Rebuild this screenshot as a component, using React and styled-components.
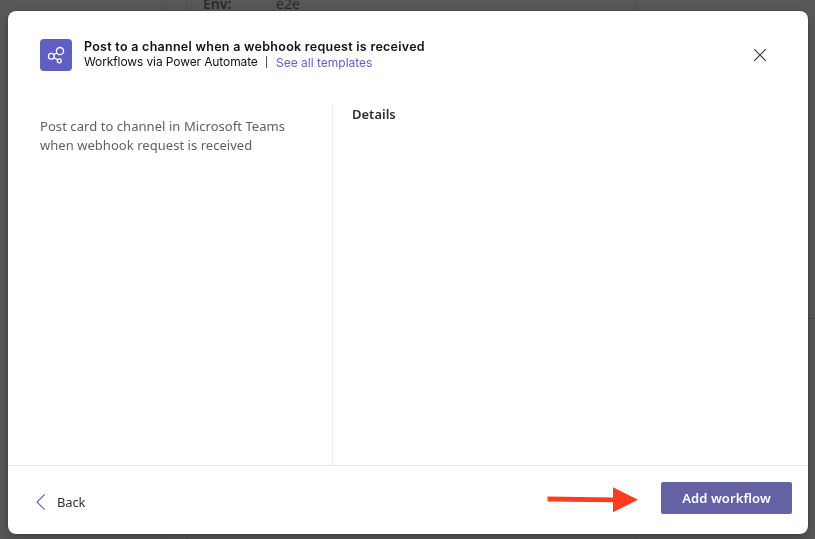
import React from "react";
import styled, { createGlobalStyle } from "styled-components";

const GlobalStyle = createGlobalStyle`
  * { box-sizing: border-box; }
  html, body { margin: 0; padding: 0; }
  body { overflow: hidden; background: #595959; }
`;

const system = `Inter, "Liberation Sans", sans-serif`;
const segoe = `"Noto Sans", "Open Sans", sans-serif`;

const Page = styled.div`
  position: relative;
  width: 815px;
  height: 539px;
  overflow: hidden;
  background: #595959;
`;

const Backdrop = styled.div`
  display: grid;
  grid-template-columns: 167px 20px 449px 1fr;
  height: 100%;
`;

const BackdropPane = styled.div`
  border-right: ${(p) => (p.$last ? "0" : "1px solid #535353")};
  padding-left: ${(p) => (p.$inset ? "16px" : "0")};
`;

const BackdropSection = styled.div`
  height: 319px;
  border-bottom: 1px solid #4c4c4c;
`;

const EnvRow = styled.div`
  display: grid;
  grid-template-columns: 73px 1fr;
  margin-top: -6px;
  font: 400 14px/20px ${segoe};
  color: #292929;
`;

const EnvLabel = styled.span`
  font-weight: 600;
`;

const Dialog = styled.section`
  position: absolute;
  top: 11px;
  left: 8px;
  display: flex;
  flex-direction: column;
  width: 800px;
  height: 523px;
  border-radius: 8px;
  background: #fff;
  box-shadow: 0 4px 14px rgba(0, 0, 0, 0.28), 0 0 2px rgba(0, 0, 0, 0.3);
  will-change: transform;
`;

const Header = styled.header`
  display: flex;
  align-items: flex-start;
  height: 93px;
  padding: 28px 32px 0;
`;

const AppIcon = styled.div`
  display: flex;
  flex: none;
  width: 32px;
  height: 32px;
  margin-right: 12px;
  border-radius: 4px;
  background: #605ec2;
`;

const Titles = styled.div`
  flex: 1;
  font-family: ${system};
  color: #111;
`;

const Title = styled.h1`
  margin: 0 0 -1px;
  font-size: 12.5px;
  font-weight: 600;
  line-height: 16px;
  letter-spacing: 0.27px;
  white-space: nowrap;
`;

const Subtitle = styled.div`
  display: flex;
  font-size: 12px;
  line-height: 15px;
  white-space: nowrap;
`;

const Provider = styled.span`
  width: 181px;
  letter-spacing: -0.11px;
`;

const Separator = styled.span`
  width: 11px;
  padding-top: 1px;
  font-size: 10px;
`;

const TemplateLink = styled.a`
  padding-top: 1px;
  letter-spacing: 0;
  color: #6360c9;
`;

const CloseButton = styled.button`
  display: flex;
  margin: 9px 9px 0 0;
  padding: 0;
  border: 0;
  background: none;
`;

const Body = styled.main`
  display: grid;
  grid-template-columns: 325px 1fr;
  height: 361px;
`;

const Description = styled.p`
  margin: 0;
  padding: 13px 32px 0;
  border-right: 1px solid #ebebeb;
  font: 400 13px/19px ${segoe};
  color: #616161;
  white-space: nowrap;
`;

const DescriptionLine = styled.span`
  display: block;
  letter-spacing: ${(p) => p.$tracking};
`;

const Details = styled.h2`
  margin: 0;
  padding: 0 0 0 19px;
  font: 600 13px/20px ${segoe};
  color: #303030;
`;

const Footer = styled.footer`
  display: flex;
  align-items: flex-start;
  flex: 1;
  padding: 16px 16px 0 27px;
  border-top: 1px solid #e6e6e6;
`;

const BackButton = styled.button`
  display: flex;
  align-items: center;
  gap: 10px;
  margin: 10px auto 0 0;
  padding: 0;
  border: 0;
  background: none;
  font: 400 13px/20px ${segoe};
  letter-spacing: -0.15px;
  color: #303030;
`;

const ArrowPointer = styled.svg`
  flex: none;
  width: 92px;
  height: 28px;
  margin: 4px 23px 0 0;
`;

const PrimaryButton = styled.button`
  width: 131px;
  height: 32px;
  padding: 0;
  border: 0;
  border-radius: 2px;
  background: #6462a4;
  font: 600 13px/32px ${segoe};
  letter-spacing: 0.1px;
  color: #fff;
`;

export default function App() {
  return (
    <>
      <GlobalStyle />
      <Page>
        <Backdrop>
          <BackdropPane />
          <BackdropPane />
          <BackdropPane $inset>
            <EnvRow>
              <EnvLabel>Env:</EnvLabel>
              <span>e2e</span>
            </EnvRow>
          </BackdropPane>
          <BackdropPane $last>
            <BackdropSection />
          </BackdropPane>
        </Backdrop>
        <Dialog>
          <Header>
            <AppIcon>
              <svg width="32" height="32" viewBox="0 0 32 32" fill="none" stroke="#fff" strokeWidth="1.3">
                <circle cx="20" cy="12.1" r="3.6" />
                <circle cx="11.3" cy="17.3" r="2.9" />
                <circle cx="19.3" cy="21.8" r="2" />
                <path d="M13.8 15.8 17 13.9M13.9 18.6l3.6 2.2" />
              </svg>
            </AppIcon>
            <Titles>
              <Title>Post to a channel when a webhook request is received</Title>
              <Subtitle>
                <Provider>Workflows via Power Automate</Provider>
                <Separator>|</Separator>
                <TemplateLink>See all templates</TemplateLink>
              </Subtitle>
            </Titles>
            <CloseButton aria-label="Close">
              <svg width="14" height="14" viewBox="0 0 14 14" fill="none" stroke="#303030" strokeWidth="1.05">
                <path d="M1.2 1.2 12.8 12.8M12.8 1.2 1.2 12.8" />
              </svg>
            </CloseButton>
          </Header>
          <Body>
            <Description>
              <DescriptionLine $tracking="0.06px">Post card to channel in Microsoft Teams</DescriptionLine>
              <DescriptionLine $tracking="0.04px">when webhook request is received</DescriptionLine>
            </Description>
            <Details>Details</Details>
          </Body>
          <Footer>
            <BackButton>
              <svg width="12" height="18" viewBox="0 0 12 18" fill="none" stroke="#5b59a5" strokeWidth="1.1">
                <path d="M9.7 1.3 2 9l7.7 7.7" />
              </svg>
              Back
            </BackButton>
            <ArrowPointer viewBox="0 0 92 28" fill="#fc3d21">
              <path d="M1.5 10.5 67 11.6V1.2L92 13.8 67 26.2V16.2L1.5 15.5z" />
            </ArrowPointer>
            <PrimaryButton>Add workflow</PrimaryButton>
          </Footer>
        </Dialog>
      </Page>
    </>
  );
}
